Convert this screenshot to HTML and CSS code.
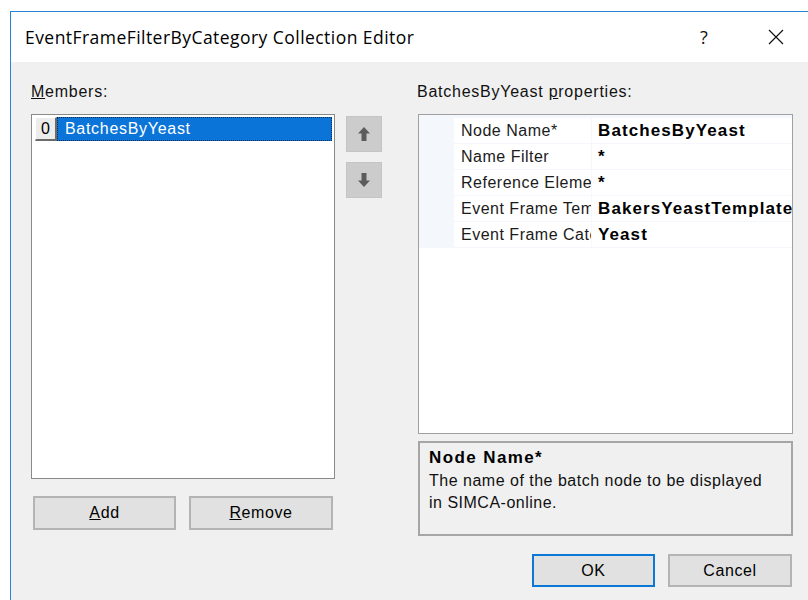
FILE: index.html
```html
<!DOCTYPE html>
<html lang="en">
<head>
<meta charset="utf-8">
<title>EventFrameFilterByCategory Collection Editor</title>
<link rel="stylesheet" href="styles.css">
</head>
<body>
<div class="window">
  <div class="titlebar">
    <span class="title">EventFrameFilterByCategory Collection Editor</span>
    <span class="caption-btn help">?</span>
    <span class="caption-btn close">
      <svg width="16" height="16" viewBox="0 0 16 16"><path d="M1 1 L15 15 M15 1 L1 15" stroke="#111" stroke-width="1.2" fill="none"/></svg>
    </span>
  </div>
  <div class="client">
    <div class="col-members">
      <div class="label"><u>M</u>embers:</div>
      <div class="listbox">
        <div class="item">
          <span class="index">0</span>
          <span class="item-name">BatchesByYeast</span>
        </div>
      </div>
      <div class="btn-row">
        <button class="btn btn-add"><u>A</u>dd</button>
        <button class="btn btn-remove"><u>R</u>emove</button>
      </div>
    </div>
    <div class="col-order">
      <div class="arrow-btn">
        <svg width="12" height="14" viewBox="0 0 12 14"><path d="M6 0 L12 6.5 L8.5 6.5 L8.5 14 L3.5 14 L3.5 6.5 L0 6.5 Z" fill="#5c5c5c"/></svg>
      </div>
      <div class="arrow-btn">
        <svg width="12" height="14" viewBox="0 0 12 14"><path d="M6 14 L12 7.5 L8.5 7.5 L8.5 0 L3.5 0 L3.5 7.5 L0 7.5 Z" fill="#5c5c5c"/></svg>
      </div>
    </div>
    <div class="col-props">
      <div class="label label-props">BatchesByYeast <u>p</u>roperties:</div>
      <div class="grid">
        <div class="grid-top"></div>
        <div class="row">
          <div class="gutter"></div>
          <div class="prop-name"><span class="clip">Node Name*</span></div>
          <div class="prop-value">BatchesByYeast</div>
        </div>
        <div class="row">
          <div class="gutter"></div>
          <div class="prop-name"><span class="clip">Name Filter</span></div>
          <div class="prop-value">*</div>
        </div>
        <div class="row">
          <div class="gutter"></div>
          <div class="prop-name"><span class="clip">Reference Element Name</span></div>
          <div class="prop-value">*</div>
        </div>
        <div class="row">
          <div class="gutter"></div>
          <div class="prop-name"><span class="clip">Event Frame Template</span></div>
          <div class="prop-value">BakersYeastTemplate</div>
        </div>
        <div class="row">
          <div class="gutter"></div>
          <div class="prop-name"><span class="clip">Event Frame Category</span></div>
          <div class="prop-value">Yeast</div>
        </div>
      </div>
      <div class="desc">
        <div class="desc-title">Node Name*</div>
        <div class="desc-text">The name of the batch node to be displayed in SIMCA-online.</div>
      </div>
      <div class="dlg-buttons">
        <button class="btn btn-ok">OK</button>
        <button class="btn btn-cancel">Cancel</button>
      </div>
    </div>
  </div>
</div>
</body>
</html>
```
FILE: styles.css
```css
html, body {
  margin: 0;
  padding: 0;
  background: #ffffff;
  overflow: hidden;
}

body {
  width: 808px;
  height: 600px;
  font-family: "Liberation Sans", Arial, sans-serif;
  font-size: 16px;
  color: #000;
}

.window {
  margin: 11px 0 0 10px;
  width: 801px;
  height: 589px;
  border-left: 1px solid #2b83d4;
  border-top: 1px solid #2b83d4;
  background: #f0f0f0;
  display: flex;
  flex-direction: column;
}

/* caption */
.titlebar {
  height: 50px;
  background: #ffffff;
  display: flex;
  align-items: center;
  flex-shrink: 0;
}

.title {
  flex: 1;
  padding-left: 14px;
  font-family: "Open Sans", "Noto Sans", sans-serif;
  font-size: 17.5px;
  letter-spacing: 0.45px;
  color: #000;
}

.caption-btn {
  width: 72px;
  height: 50px;
  display: flex;
  align-items: center;
  justify-content: center;
}

.help {
  font-family: "Open Sans", sans-serif;
  font-size: 18px;
  color: #111;
}

/* client area */
.client {
  display: flex;
  padding-left: 20px;
}

.label {
  height: 52px;
  box-sizing: border-box;
  padding-top: 21px;
  line-height: 18px;
  letter-spacing: 0.75px;
  color: #111;
}

.col-members {
  width: 304px;
}

.listbox {
  height: 365px;
  box-sizing: border-box;
  border: 1px solid #8a8a8a;
  background: #fff;
  padding: 2px 2px 0 3px;
}

.item {
  display: flex;
  height: 25px;
}

.index {
  width: 22px;
  height: 24px;
  box-sizing: border-box;
  background: #ececec;
  border-top: 1px solid #fff;
  border-left: 1px solid #fff;
  border-right: 2px solid #6b6b6b;
  border-bottom: 2px solid #6b6b6b;
  text-align: center;
  line-height: 21px;
  font-size: 16px;
}

.item-name {
  flex: 1;
  background: #0a74d9;
  color: #fff;
  outline: 1px dotted #0b2a50;
  outline-offset: -1px;
  line-height: 23px;
  height: 24px;
  padding-left: 8px;
  letter-spacing: 0.7px;
}

.btn-row {
  display: flex;
  margin-top: 17px;
  padding-left: 2px;
  gap: 13px;
}

.btn {
  font-family: "Liberation Sans", Arial, sans-serif;
  font-size: 16px;
  letter-spacing: 0.6px;
  color: #000;
  background: #e1e1e1;
  border: 2px solid #b4b4b4;
  padding: 0;
  margin: 0;
  height: 34px;
  box-sizing: border-box;
}

.btn-add { width: 143px; }
.btn-remove { width: 144px; }

/* reorder buttons */
.col-order {
  margin-left: 11px;
  padding-top: 54px;
  display: flex;
  flex-direction: column;
  gap: 10px;
}

.arrow-btn {
  width: 36px;
  height: 36px;
  box-sizing: border-box;
  background: #cccccc;
  border: 1px solid #c4c4c4;
  display: flex;
  align-items: center;
  justify-content: center;
}

/* property grid */
.col-props {
  margin-left: 36px;
  width: 375px;
}

.label-props {
  margin-left: -1px;
}

.grid {
  height: 320px;
  box-sizing: border-box;
  border: 1px solid #a0a0a0;
  background: #fff;
  overflow: hidden;
}

.grid-top {
  height: 3px;
  background: #f4f7fc;
}

.row {
  display: flex;
  height: 26px;
  box-sizing: border-box;
  border-bottom: 1px solid #f4f7fc;
}

.gutter {
  width: 35px;
  background: #f4f7fc;
  flex-shrink: 0;
}

.prop-name {
  width: 138px;
  flex-shrink: 0;
  box-sizing: border-box;
  border-right: 1px solid #f4f7fc;
  padding-left: 7px;
  overflow: hidden;
  line-height: 25px;
  color: #1b1b1b;
  letter-spacing: 0.5px;
}

.clip {
  display: block;
  width: 130px;
  white-space: nowrap;
  overflow: hidden;
}

.prop-value {
  flex: 1;
  min-width: 0;
  padding-left: 6px;
  white-space: nowrap;
  overflow: hidden;
  line-height: 25px;
  font-size: 17px;
  font-weight: bold;
  letter-spacing: 1.1px;
}

.desc {
  margin-top: 7px;
  height: 95px;
  box-sizing: border-box;
  border: 2px solid #a6a6a6;
  padding: 3px 24px 0 9px;
}

.desc-title {
  font-weight: bold;
  font-size: 17px;
  line-height: 24px;
  letter-spacing: 1.4px;
}

.desc-text {
  line-height: 22px;
  letter-spacing: 0.5px;
  color: #111;
}

.dlg-buttons {
  display: flex;
  justify-content: flex-end;
  gap: 13px;
  margin-top: 18px;
  padding-right: 1px;
}

.btn-ok {
  width: 123px;
  height: 33px;
  border: 2px solid #0b78d7;
}

.btn-cancel {
  width: 124px;
  height: 33px;
}
```
